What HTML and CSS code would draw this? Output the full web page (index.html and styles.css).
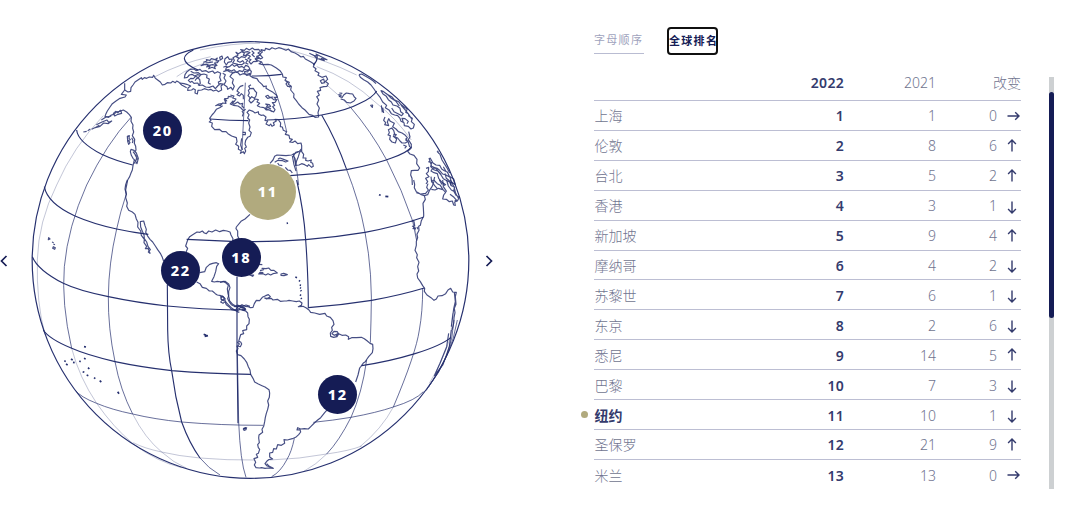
FILE: index.html
```html
<!DOCTYPE html>
<html lang="zh-CN">
<head>
  <meta charset="UTF-8" />
  <meta name="viewport" content="width=device-width, initial-scale=1.0"/>
  <title>全球排名</title>
  <link rel="stylesheet" href="styles.css">
</head>
<body>

<main class="page">
  <section class="globe">
    <svg class="globe-map" viewBox="0 0 1620 1542">
      <circle class="outline" cx="751.5" cy="780" r="655"/>

      <!-- parallels -->
      <g class="grid">
        <path d="M580 150Q553 163 553 176Q555 194 594 210M755 228Q800 229 845 223M940 195Q954 182 951 169"/>
        <path d="M630 357Q690 362 745 362M800 360Q885 358 965 345Q1040 332 1080 310Q1119 292 1130 273"/>
        <path d="M230 390Q233 425 305 463Q345 482 398 495M870 527Q955 522 1040 509Q1130 492 1175 474Q1224 457 1235 440"/>
        <path d="M133 560Q142 610 225 648Q280 672 350 687Q395 697 445 703M560 718L695 724M750 725Q835 725 917 719Q1010 711 1095 697Q1190 680 1270 652"/>
        <path d="M97 770Q113 810 190 850Q235 872 325 890Q410 908 502 918Q610 928 710 930M925 923Q1020 916 1115 901Q1200 886 1273 864"/>
        <path d="M130 990Q146 1016 215 1045Q260 1065 345 1085Q425 1102 515 1112Q630 1122 753 1123M1085 1097Q1170 1084 1245 1061Q1325 1036 1353 1012"/>
        <path class="mid" d="M225 1170Q241 1191 290 1210Q335 1229 398 1242Q465 1258 545 1266Q660 1276 790 1276M940 1267Q1000 1261 1053 1252Q1130 1238 1180 1221Q1248 1200 1270 1175"/>
        <path class="faint" d="M400 1328Q432 1345 485 1356Q535 1368 600 1374Q680 1381 765 1380M810 1380Q900 1377 980 1362Q1050 1352 1085 1338"/>
      </g>

      <!-- meridians -->
      <g class="grid">
        <path class="faint" d="M310 347Q220 440 170 555Q115 665 112 780Q109 910 135 1003"/>
        <path class="mid" d="M393 352Q320 430 260 555Q204 680 193 800Q184 910 215 1045"/>
        <path class="faint" d="M215 1045Q238 1133 290 1210Q340 1282 400 1332Q470 1385 545 1403M465 230Q540 190 632 170M530 230Q570 200 640 182M600 150Q700 128 780 130"/>
        <path class="mid" d="M378 585Q361 635 350 687Q326 790 325 890Q324 985 345 1085Q361 1170 398 1242"/>
        <path class="faint" d="M398 1242Q435 1315 485 1356Q520 1388 560 1405"/>
        <path d="M502 855L503 990Q504 1060 515 1112Q525 1190 545 1266Q568 1330 600 1374"/>
        <path class="mid" d="M600 1374Q625 1405 660 1425M736 248L726 450M712 1050L716 1266Q721 1385 738 1432"/>
        <path d="M711 830L711 1045L714 1270"/>
        <path class="mid" d="M785 185Q838 280 860 395M880 460Q892 510 896 555"/>
        <path d="M890 540Q911 630 917 719Q925 830 925 925M965 345Q1009 420 1040 509"/>
        <path class="mid" d="M883 1315Q875 1355 860 1380Q842 1415 815 1430M1040 509Q1078 605 1095 697Q1119 820 1113 960L1111 1028M1100 1080Q1086 1180 1053 1252Q1018 1322 980 1362"/>
        <path class="faint" d="M980 1362Q950 1393 910 1415M977 252Q1018 286 1050 320M950 200Q1050 235 1130 310Q1185 352 1234 420M850 145Q980 180 1070 225M1180 1221Q1145 1287 1080 1340M1358 940L1352 1010Q1325 1090 1288 1150M1250 720L1243 665"/>
        <path class="mid" d="M1050 320Q1113 393 1160 480Q1207 571 1238 663L1250 722M1268 865Q1268 935 1258 990Q1248 1060 1180 1221M1362 960Q1357 1070 1285 1162M1372 960Q1355 1070 1278 1172"/>
      </g>

      <!-- Alaska and the west coast -->
      <g class="coast" transform="translate(90 105)">
        <path d="M470 158L455 150L447 142L440 138L436 143L428 139L422 144L412 143L405 148L397 150L391 141L382 134L376 130L371 121L368 127L358 126L350 130L343 128L337 133L334 128L325 134L315 141L309 150L303 158L302 169L294 171L284 165L274 178L289 180L285 186L270 190L258 198L247 206L240 216L232 228L228 236L225 244L236 247L244 240L252 238L258 231L268 229L280 225L290 231L298 239L304 247L303 259L309 270L308 280L311 291L307 302L314 313L313 325L317 334L318 345L314 352"/>
        <path d="M284 145L284 165M160 291L170 289M173 287L181 282M185 283L199 276L208 271M199 269L216 261L231 255L236 262L245 258L235 266L221 264L210 274L196 278M214 255L228 246L244 243M250 235L257 229L263 233L272 226L275 235L264 238L254 243ZM292 304L298 302L297 310L301 314L295 316L300 323L296 328L293 319ZM305 308L309 317L307 324"/>
        <path d="M303 343L312 346L319 354L325 370L321 386L315 376L309 370L304 361L301 350ZM309 350L318 362L322 374M316 386L311 380M313 355L320 368L317 380M313 375L309 392L307 405L303 414L299 425L293 435L291 445L289 455L287 465L289 480"/>
      </g>
      <g class="coast" transform="translate(90 540)">
        <path d="M292 0L287 14L285 27L289 42L287 53L292 69L290 79L296 91L307 96L315 103L319 117L324 127L323 141L332 153L334 166L343 178L342 188L350 199L346 206L354 205L360 220L355 216L361 209L354 199L350 186L343 176L342 164L337 154L332 141L331 125L341 123L345 137L349 148L347 157L354 170L360 178L368 186L376 198L383 209L391 220L397 232L401 244"/>
        <path d="M500 306L510 311L517 322L529 325L538 333L547 333L556 341L562 345L573 347L581 351L586 357L579 350L572 354L577 360L572 366L579 370L585 365L589 374L597 380L605 389L617 391L622 381L631 377L640 378L648 375L660 379M466 240L466 222L473 205L467 198L473 180L479 170L488 164L501 156L510 157L517 153L523 159L529 161L536 153L546 156L557 150L569 155L580 151L591 153L600 156L603 165L609 176L607 188M509 278L524 275L529 262L539 253L548 250L559 248L566 251L560 259L557 275L552 290L545 304L553 306L562 304L574 306L585 304L596 312L600 323L596 334L596 347L593 356L598 366L604 374L616 380L628 377L640 382M660 103L645 117L633 124L619 141L618 146L623 153L623 168L629 180M621 381L626 377L634 383L645 385L643 392L630 388L620 394L628 397"/>
        <path d="M56 173L60 177L55 179ZM66 186L71 188M70 192L75 194M70 200L76 203L74 208L68 205Z"/>
      </g>

      <!-- Arctic Canada, Hudson Bay -->
      <g class="coast" transform="translate(540 105)">
        <path d="M0 144L12 146L20 148L32 153L24 159L23 166L35 165L40 161L46 164L45 174L52 177L54 166L65 165L73 161L85 165L92 163L100 168L109 165L115 170L125 165L123 153L130 147L120 146L113 153L106 161L99 153L88 157L77 156L67 150L58 151L53 144L42 145L36 139L31 142L25 136L32 130L40 131L47 124L55 128L61 121L52 119L44 123L36 118L28 120L22 127L13 129L15 119L21 110L31 103L42 102L49 107L60 103L66 109L78 107L85 112L98 108L104 115L113 110L122 115L119 127L123 137L115 141L118 151"/>
        <path d="M32 109L42 114L55 113L63 119L72 117L81 120L80 128L88 132L85 144L92 148M45 137L51 129L59 133L61 145L54 151M128 115L136 119L132 129L138 138L132 149L141 155L143 163L153 157L158 165L163 154L157 144L160 133L150 125L156 116L164 111L174 113L180 120L189 116L201 118L211 115L210 122L219 128L231 131L236 139L246 148L251 155L259 153L258 160L268 166L279 172L289 180L292 187L283 187L289 195L281 194L273 187L263 190L257 184L264 181L269 187L280 186M292 192L285 202L277 203L284 211L278 215L285 224L281 231L271 226L264 224L257 219L263 211L257 207L268 209L272 214L262 217L273 222M277 230L268 225L259 225L252 218L240 216L232 212L239 205L231 201L235 194L225 192L220 198L213 204L207 197L210 188L204 182L208 174L205 166L210 161L206 154L213 149M210 161L220 160L225 168L230 173L228 183L223 190L215 185L210 192M151 180L162 183L158 189L168 192L164 198L157 205L162 208L173 201L180 207L188 205L186 213L192 219M160 197L151 207L160 211L174 213L183 219L190 227L197 223"/>
        <path d="M190 151L181 154L175 161L171 168L178 173L171 179L179 183L184 176L190 181L190 193M157 186L145 184L144 190L134 191L140 198L133 193L138 205L128 204L121 212L113 210L107 212L116 207L125 206M128 212L119 218L109 223L103 232L96 240L89 250L93 256L88 261L97 264L95 274L104 284L118 283L127 290L138 290L144 296L155 303L169 308L171 320L167 328L176 334L175 343L184 347L181 355L190 350L193 356L197 348L194 340L199 336L195 327L197 316L203 307L210 304L214 293L207 286L210 276L206 264L209 255L203 249L207 239L201 232L208 225L219 229L225 234L235 230L236 237L243 241L250 240L258 246L255 256L263 258L258 267L268 272L272 267L276 274L283 270L280 263L289 258L285 253L295 254L302 264L301 275L307 276L310 286L320 290L316 298L327 301L329 311L337 313L329 321L339 322L345 318L353 326L363 324L365 332L365 341L358 349L347 352L340 363L345 370L348 392"/>
        <path d="M185 310L182 330L187 345M188 292L196 292L196 299L188 299M186 228L190 235L187 244M148 95L157 88L163 94L171 90L177 97L186 94L192 99L197 91L205 94L210 103L201 106L193 102L188 110L178 107L170 112L162 104L154 108L146 104L137 105L139 97ZM135 71L143 65L148 73L157 72L154 80L144 82L139 90L133 81ZM158 84L163 76L159 68L168 63L176 69L172 78L180 82L188 77L193 84L185 89L174 88ZM70 82L81 78L79 74L90 76L94 71L105 74L112 69L108 78L117 77L112 83L103 84L111 91L103 95L106 101L96 97L86 101L90 93L80 96L84 89L73 89L63 92L72 86M119 67L126 63L128 70L121 75ZM77 84L86 83L99 81M83 92L98 89L107 91M168 52L175 56L185 50L193 54L190 61L201 61L195 67L184 65L178 70L168 65L174 60ZM182 44L193 46L199 40L208 45L217 39L224 44L236 43L242 49L234 54L242 60L230 64L237 70L226 72L232 79L220 80L213 87L207 80L213 74L204 70L211 64L200 58L210 53L202 50L192 52ZM215 47L222 54L216 59L224 66M195 72L203 76L197 84L205 88M130 97L137 94L145 97M130 110L141 106L150 111L165 113M194 109L203 111L207 104L214 109L212 118L200 121L194 116Z"/>
        <path d="M226 71L234 65L241 72L248 68L239 58L247 51L243 44L254 47L257 40L268 44L276 38L286 42L296 38L307 41L318 46L325 42L333 50L345 54L354 59L363 66L370 64L376 72L386 77L394 82L403 88L400 95L408 101L405 107L417 114L414 121L426 127L438 123L443 133L436 139L445 146L441 154L431 155L420 158L422 166L412 169L418 180L410 185L416 195L411 207L418 219L414 233L416 246L405 247L397 241L387 238L375 225L366 218L356 207L349 197L341 187L342 177L332 165L334 154L323 154L318 147L324 140L315 136L319 128L309 126L307 117L300 107L289 99L274 90L264 88L248 89L237 86L245 81L235 77Z"/>
        <path d="M317 139L328 142L325 148L332 152L327 157M421 137L431 132L434 143L425 145ZM388 55L400 61L413 63L408 57L421 64L431 69L441 74L424 71L433 77L415 71M397 58L410 70M400 60L412 70"/>
        <path d="M270 385L279 375L284 364L291 360L306 361L318 362L335 360L343 356L355 350M284 382L294 376L308 377L317 381L324 378L311 373L300 369L294 372M293 384L297 390L307 392M316 397L323 405L331 406L337 414M337 363L342 389L348 408M365 343L359 352L355 365L350 377L347 391L357 390L365 386L374 389L382 394L386 389L395 397L400 394L398 385L392 382L394 375L384 378L377 376L378 369L369 369L371 358L365 350Z"/>
      </g>

      <!-- Europe and Africa -->
      <g class="coast" transform="translate(750 105)">
        <path d="M265 179L274 180L268 184L277 187L281 180L289 174L299 176L308 177L313 186L318 190L312 198L301 204L290 202L283 195L272 192M268 174L277 175M362 211L368 210L367 217ZM327 119L335 117L347 124L360 131L370 138L378 146M327 119L331 127L341 134L353 141L363 150L372 162L380 174L391 188L398 201L410 211L406 218L418 226L424 236L434 240L443 242L450 250L453 259L462 263L463 272L475 274L483 282L490 279L493 268L484 260L487 250L477 244L475 236L467 232L472 222L462 215L452 208L446 200L433 194L425 185L410 177L399 169L393 167L399 177L409 184L415 194L424 201L429 210L441 213L450 220L452 230L460 236L455 242L444 236L432 230L425 219M409 175L424 190L438 199L448 213M453 210L466 225L476 238L485 252M460 262L456 250L465 251L475 259L471 266M394 211L397 232M398 218L401 234"/>
        <path d="M405 246L401 256L407 263L404 269L416 272L412 261L416 251L421 259L433 265L428 275L438 282L445 290L456 294L464 299L472 308L467 315L474 319L466 324L456 324L450 318L443 309L434 305L439 299L430 298M415 284L425 279L431 286L434 297L430 304L440 312L436 324L426 321L419 313L421 302L414 300L418 293ZM476 290L480 306L475 314L484 328L483 340L473 349L480 357L492 361L501 373L500 386L509 399L504 406L493 406L484 407L482 420L486 430L487 450M467 310L475 322L479 336M460 330L469 334L464 340"/>
        <path d="M540 368L549 384L558 390L569 391L575 402L583 407L592 411L598 424L611 432L616 449L604 440L600 427L588 420L578 417L568 405L560 399L548 400L543 408L552 413L562 416L566 430L575 441L588 450M535 380L545 383L542 395L553 405L563 408L573 420L580 431L592 438L607 445M561 349L570 358L576 375L590 397L599 414M563 347L566 356M528 400L536 397L535 410L529 416L537 425L527 430L533 440L528 447M543 425L545 442M554 426L551 438M585 415L589 430L598 437L603 452M580 395L589 411M537 369L545 394L555 398L574 419"/>
      </g>
      <g class="coast" transform="translate(750 540)">
        <path d="M491 0L494 13L493 23L499 35L506 39L514 44L523 47L533 44L538 32L546 20L551 8L546 0M499 38L512 42L527 40L535 30L530 22L534 11M523 47L526 58L519 70L520 83L521 101L521 109L514 122L511 136L506 139L507 151L501 163L503 173L499 184L499 196L495 211L502 224L500 233L507 247L503 260L506 273L501 282L503 294L511 305L518 317L524 325L523 334L531 345L543 353L552 361L559 357L564 348L576 347L587 341L594 330L602 325L608 336L619 337L616 350L618 373L613 385L615 398L612 413L611 430L606 450M613 337L616 365L611 387L608 409L604 440"/>
        <path d="M546 6L554 17L562 26M551 0L562 11L571 16L579 29L587 37L581 45L578 57L589 58L598 65L607 63L611 75L616 76L614 66L622 63L628 52L618 46L611 33L614 21L604 17L600 5M578 0L580 20L590 35M590 0L595 18L604 30L614 35M584 17L580 10M601 0L612 20L617 40L626 56M600 43L612 52L620 61L614 62M544 28L555 30L566 25L578 29M568 0L576 13"/>
        <path d="M486 138L493 141L489 146L497 144L494 149M501 141L504 148M484 125L491 121L494 138"/>
        <path d="M596 460L590 500L570 550L553 588M604 450L598 500L579 554L556 584"/>
      </g>

      <!-- Caribbean and South America -->
      <g class="coast" transform="translate(660 720)">
        <path d="M120 92L131 89L126 85L138 86L146 84L153 91L162 91L172 99L159 101L152 105L144 101L137 105L129 101L116 102L120 97L130 98M89 105L101 105L98 109ZM183 102L191 100L202 104L192 107L183 106ZM117 73L127 74"/>
        <path d="M0 127L10 124L19 130L25 136L22 147L24 161L27 173L29 183L38 193L48 199L58 199L66 194L75 199L85 200L91 203L99 202L103 191L109 181L119 182L127 172L137 167L145 164L151 170L140 177L134 174L146 176L154 175L159 180L172 178L181 184L193 183L200 183L207 181L218 183L229 185L238 183L246 189L244 196L235 200L249 199L259 204L267 210L272 217L284 219L299 223L315 220L320 228L331 232L339 242L342 253L335 262L337 271L331 279L332 289L341 292L351 290L356 282L352 275L342 274L336 281L343 286L353 281L348 289M356 281L366 286L377 285L386 290L385 298L395 293L409 293L424 292L433 296L442 303L450 310L458 313L459 326L457 338L446 350L441 357L436 365L430 369L423 379L419 384L414 405L407 426"/>
        <path d="M0 171L8 168L13 174L8 181L2 177M9 183L14 179L19 188L27 196L36 205L47 212L55 207L52 200M57 208L62 201L71 201L77 209L66 209L77 213L83 219L84 230L88 238L87 251L80 258L80 269L68 272L71 281L62 284L59 294L56 304L62 306L65 312L61 320L51 318L54 326L49 333L53 344L63 347L73 357L80 367L85 380L90 390L92 403L99 415L104 426L115 432L126 437L135 441L147 449L149 459L148 472L143 483L146 495L143 508L139 520L136 532L134 545L131 559L126 568L128 577L117 585L116 594L118 608L113 614L115 623L119 628L115 640L109 643L113 652L102 656L107 667L103 675L108 683L118 684L125 683L135 685L146 684L160 685L152 682L140 677L135 671L142 662L146 659L158 657L149 651L149 639L158 637L161 626L169 627L173 614L184 616L194 610L192 599L202 600L217 596L227 592L236 584L242 576L240 569L231 570L233 563L242 567L253 566L265 567L273 559L283 549L293 540L302 533L314 518L322 509M43 200L53 195L66 203L77 206M52 306L58 312L53 319M140 671L148 679L160 685M70 567L80 563L78 569L72 571Z"/>
      </g>

      <!-- small islands -->
      <g class="islands" transform="translate(660 720)">
        <path d="M226 111l5 2M237 121l3 3M239 135l4 1M240 143l3 2M242 151l2 3M240 164l3 3M243 174l2 3"/>
      </g>
      <g class="islands" transform="translate(750 540)">
        <path d="M387 44l5 2M406 49l9 1M110 130l4 -1"/>
      </g>
      <g class="islands" transform="translate(90 990)">
        <path d="M162 50l6 1M103 92l4 3M108 102l5 3M123 87l5 3M129 97l5 1M148 93l4 2M162 85l5 2M174 113l4 4M158 125l5 2M170 135l5 2M192 143l4 3M209 152l5 4M263 185l4 6M521 13l8 3M524 19l10 -2M640 296l8 -3"/>
      </g>
    </svg>

    <span class="marker m20">20</span>
    <span class="marker m11 active">11</span>
    <span class="marker m18">18</span>
    <span class="marker m22">22</span>
    <span class="marker m12">12</span>

    <button class="nav prev" aria-label="上一个"><svg viewBox="0 0 8 12"><path d="M6.5 1L1.5 6L6.5 11"/></svg></button>
    <button class="nav next" aria-label="下一个"><svg viewBox="0 0 8 12"><path d="M1.5 1L6.5 6L1.5 11"/></svg></button>
  </section>

  <section class="ranking">
    <div class="tabs">
      <button class="tab">字母顺序</button>
      <button class="tab selected">全球排名</button>
    </div>
    <div class="list">
      <table>
        <colgroup>
          <col class="c-name"><col class="c-now"><col class="c-last"><col class="c-change"><col class="c-arrow">
        </colgroup>
        <thead>
          <tr><th></th><th class="now">2022</th><th>2021</th><th colspan="2">改变</th></tr>
        </thead>
        <tbody id="rows"></tbody>
      </table>
      <div class="scrollbar"><div class="thumb"></div></div>
    </div>
  </section>
</main>

<script>
  // name, 2022, 2021
  const cities = [
    ["上海", 1, 1],
    ["伦敦", 2, 8],
    ["台北", 3, 5],
    ["香港", 4, 3],
    ["新加坡", 5, 9],
    ["摩纳哥", 6, 4],
    ["苏黎世", 7, 6],
    ["东京", 8, 2],
    ["悉尼", 9, 14],
    ["巴黎", 10, 7],
    ["纽约", 11, 10],
    ["圣保罗", 12, 21],
    ["米兰", 13, 13]
  ];

  const arrows = {
    same: "M0.5 7H12M8.2 3.2L12 7L8.2 10.8",
    up: "M5 12.5V1M1.1 4.9L5 1L8.9 4.9",
    down: "M5 2.5V14M1.1 10.1L5 14L8.9 10.1"
  };

  document.getElementById("rows").innerHTML = cities.map(([name, now, last]) => {
    const change = last - now;
    const dir = change > 0 ? "up" : change < 0 ? "down" : "same";
    return `
      <tr class="${name === "纽约" ? "current" : ""}">
        <td class="name">${name}</td>
        <td class="now">${now}</td>
        <td>${last}</td>
        <td>${Math.abs(change)}</td>
        <td class="arrow"><svg viewBox="0 0 13 15"><path d="${arrows[dir]}"/></svg></td>
      </tr>`;
  }).join("");
</script>

</body>
</html>
```
FILE: styles.css
```css
* {
  box-sizing: border-box;
}
body {
  margin: 0;
  background: #fff;
  color: #151c55;
  font-family: "Noto Sans", "Noto Sans CJK SC", sans-serif;
  overflow: hidden;
}
button {
  padding: 0;
  border: none;
  background: none;
  font-family: inherit;
  color: inherit;
}
.page {
  display: flex;
  height: 514px;
}

/* globe */
.globe {
  position: relative;
  width: 540px;
  flex: none;
}
.globe-map {
  display: block;
  width: 540px;
  height: 514px;
  fill: none;
  stroke: #26306f;
  stroke-linejoin: round;
}
.outline {
  stroke-width: 3.6;
}
.grid {
  stroke-width: 3.4;
}
.mid {
  stroke-width: 2.8;
  opacity: 0.75;
}
.faint {
  stroke-width: 2.2;
  opacity: 0.38;
}
.coast {
  stroke-width: 3.5;
  opacity: 0.85;
}
.islands {
  stroke-width: 5;
}
.marker {
  position: absolute;
  width: 39px;
  height: 39px;
  border-radius: 50%;
  background: #151c55;
  color: #fff;
  font: 800 14.5px/38px "Noto Sans", sans-serif;
  letter-spacing: 1.6px;
  text-indent: 0.5px;
  text-align: center;
}
.marker.active {
  width: 56px;
  height: 56px;
  line-height: 55px;
  background: #b1aa7e;
}
.m20 { left: 143px; top: 110.5px; }
.m11 { left: 239.5px; top: 163.5px; }
.m18 { left: 221.5px; top: 238px; }
.m22 { left: 161px; top: 251px; }
.m12 { left: 318px; top: 374.5px; }
.nav {
  position: absolute;
  top: 254.5px;
  width: 8px;
  height: 12px;
}
.nav svg {
  display: block;
  width: 8px;
  height: 12px;
  fill: none;
  stroke: #151c55;
  stroke-width: 1.7;
}
.prev { left: 0; }
.next { left: 485px; }

/* ranking */
.ranking {
  padding: 27px 0 0 54px;
}
.tabs {
  display: flex;
  gap: 23px;
  height: 28px;
}
.tab {
  width: 50px;
  height: 27px;
  padding-bottom: 2px;
  border-bottom: 1px solid #b9bcd2;
  color: #a0a3bd;
  font-size: 11px;
  letter-spacing: 1.3px;
  text-align: left;
  white-space: nowrap;
}
.tab.selected {
  width: 51px;
  height: 28px;
  border: 2px solid #101010;
  border-radius: 4px;
  color: #151c55;
  font-weight: 700;
}
.list {
  display: flex;
  gap: 28px;
  padding-top: 9px;
}
table {
  width: 427px;
  table-layout: fixed;
  border-collapse: separate;
  border-spacing: 0;
}
.c-name { width: 160px; }
.c-now { width: 90px; }
.c-last { width: 92px; }
.c-change { width: 61px; }
.c-arrow { width: 24px; }
th, td {
  height: 29.92px;
  padding: 2px 0 0;
  border-bottom: 1px solid #bcbed3;
  color: #70748f;
  font-size: 14px;
  font-weight: 300;
  line-height: 20px;
  text-align: right;
}
th {
  height: 37px;
}
tbody tr:last-child td {
  border-bottom: none;
}
.name {
  position: relative;
  text-align: left;
  text-indent: 0.5px;
}
th.now, td.now {
  color: #343b6d;
  font-weight: 600;
  letter-spacing: 0.3px;
}
.current .name {
  color: #343b6d;
  font-weight: 700;
}
.current .name::before {
  content: "";
  position: absolute;
  left: -13px;
  top: 11px;
  width: 7px;
  height: 7px;
  border-radius: 50%;
  background: #b1aa7e;
}
.arrow svg {
  display: block;
  width: 13px;
  height: 15px;
  margin-left: 10px;
  fill: none;
  stroke: #343b6d;
  stroke-width: 1.4;
}
.scrollbar {
  width: 5px;
  height: 412px;
  margin-top: 13px;
  padding-top: 15px;
  background: #cdd0d2;
}
.thumb {
  height: 226px;
  border-radius: 2.5px;
  background: #151c55;
}
```
